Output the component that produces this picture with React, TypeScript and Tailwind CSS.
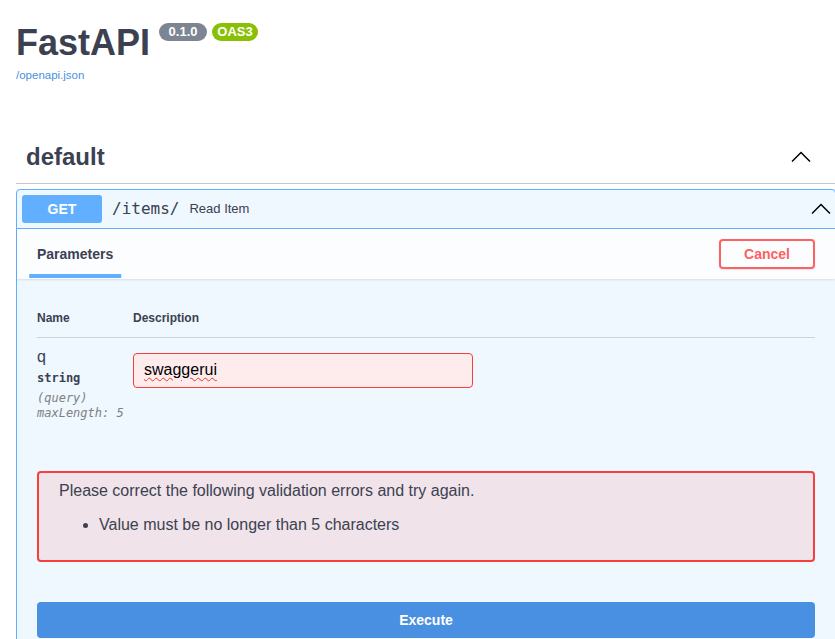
import React from 'react';

function Chevron() {
  return (
    <svg width="20" height="20" viewBox="0 0 20 20" fill="none" className="shrink-0">
      <polyline points="1,14.5 10,5.5 19,14.5" stroke="#000" strokeWidth="1.5" />
    </svg>
  );
}

export default function App() {
  return (
    <div className="w-[835px] h-[639px] overflow-hidden bg-white font-['Liberation_Sans',Arial,sans-serif] text-[#3b4151]">
      <div className="w-[820px] ml-4">
        {/* --- INFO --- */}
        <div className="pt-[21px]">
          <div className="flex items-start">
            <h1 className="text-[36px] leading-[44px] font-bold">FastAPI</h1>
            <span className="ml-[9px] mt-[2px] h-[18px] w-[48px] rounded-full bg-[#7d8492] text-white text-[13px] font-bold leading-[18px] text-center">
              0.1.0
            </span>
            <span className="ml-[5px] mt-[2px] h-[18px] w-[46px] rounded-full bg-[#89bf04] text-white text-[13px] font-bold leading-[18px] text-center">
              OAS3
            </span>
          </div>
          <a href="#" className="mt-[3px] block w-fit text-[11.5px] leading-[14px] text-[#4990e2]">
            /openapi.json
          </a>
        </div>

        {/* --- TAG HEADER --- */}
        <div className="mt-[49px] flex items-center justify-between border-b border-[#c4c6cb] py-[10px] pl-[10px] pr-[25px]">
          <h3 className="text-[24px] leading-[32px] font-bold">default</h3>
          <Chevron />
        </div>

        {/* --- OPBLOCK --- */}
        <div className="mt-[5px] rounded-[4px] border border-[#61affe] bg-[#eff7ff]">
          <div className="flex items-center border-b border-[#61affe] p-[5px] pr-[4px]">
            <span className="w-[80px] rounded-[3px] bg-[#61affe] py-[6px] text-center text-[14px] leading-[16px] font-bold text-white">
              GET
            </span>
            <span className="px-[10px] font-['DejaVu_Sans_Mono',monospace] text-[16px] leading-[20px]">/items/</span>
            <span className="flex-1 text-[13px] leading-[16px]">Read Item</span>
            <Chevron />
          </div>

          {/* tab header */}
          <div className="relative flex min-h-[50px] items-center justify-between bg-white/80 px-5 shadow-[0_1px_2px_rgba(0,0,0,0.1)]">
            <span className="relative text-[14px] leading-[16px] font-bold">
              Parameters
              <span className="absolute left-1/2 top-[28px] h-[4px] w-[120%] -translate-x-1/2 bg-[#61affe]" />
            </span>
            <button className="rounded-[4px] border-2 border-[#ff6060] px-[23px] py-[5px] text-[14px] leading-[16px] font-bold text-[#ff6060] shadow-[0_1px_2px_rgba(0,0,0,0.1)]">
              Cancel
            </button>
          </div>

          {/* parameters table */}
          <div className="p-5">
            <div className="flex border-b border-[#cbd3dc] py-3 text-[12px] leading-[14px] font-bold">
              <div className="w-[96px]">Name</div>
              <div>Description</div>
            </div>
            <div className="flex pt-[10px] pb-[10px]">
              <div className="w-[96px]">
                <div className="text-[16px] leading-[18px]">q</div>
                <div className="font-['DejaVu_Sans_Mono',monospace] text-[12px] leading-[15px] font-semibold py-[5px]">string</div>
                <div className="font-['DejaVu_Sans_Mono',monospace] text-[12px] leading-[15px] italic text-[#808080] whitespace-nowrap">(query)</div>
                <div className="font-['DejaVu_Sans_Mono',monospace] text-[12px] leading-[15px] italic text-[#808080] whitespace-nowrap">maxLength: 5</div>
              </div>
              <div>
                <div className="mt-[5px] w-[340px] rounded-[4px] border border-[#f93e3e] bg-[#feebeb] px-[10px] pt-[7px] pb-[9px] text-[16px] leading-[17px] text-black">
                  <span className="underline decoration-wavy decoration-[#e53935] decoration-1 underline-offset-2">swaggerui</span>
                </div>
              </div>
            </div>
          </div>

          {/* validation errors */}
          <div className="mx-5 mt-[20px] mb-5 rounded-[4px] border-2 border-[#f93e3e] bg-[#f0e3e9] px-5 pt-[9px] pb-[10px] text-[16px] leading-[18px]">
            Please correct the following validation errors and try again.
            <ul className="my-4 ml-10 list-disc">
              <li>Value must be no longer than 5 characters</li>
            </ul>
          </div>

          {/* execute */}
          <div className="p-5">
            <button className="w-full rounded-[4px] border-2 border-[#4990e2] bg-[#4990e2] py-2 text-[14px] leading-[16px] font-bold text-white">
              Execute
            </button>
          </div>
        </div>
      </div>
    </div>
  );
}
